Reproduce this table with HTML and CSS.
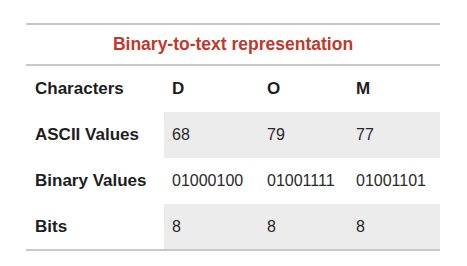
FILE: index.html
```html
<!DOCTYPE html>
<html>
<head>
<meta charset="utf-8">
<link rel="stylesheet" href="styles.css">
</head>
<body>
<div class="wrap">
  <table class="bt">
    <caption class="title">Binary-to-text representation</caption>
    <tbody>
      <tr class="row">
        <th class="label">Characters</th>
        <th class="head c1">D</th>
        <th class="head c2">O</th>
        <th class="head c3">M</th>
      </tr>
      <tr class="row shade">
        <th class="label">ASCII Values</th>
        <td>68</td>
        <td>79</td>
        <td>77</td>
      </tr>
      <tr class="row">
        <th class="label">Binary Values</th>
        <td>01000100</td>
        <td>01001111</td>
        <td>01001101</td>
      </tr>
      <tr class="row shade last">
        <th class="label">Bits</th>
        <td>8</td>
        <td>8</td>
        <td>8</td>
      </tr>
    </tbody>
  </table>
</div>
</body>
</html>
```

FILE: styles.css
```css
html, body {
  margin: 0;
  padding: 0;
  background: #fff;
}
.wrap {
  padding: 23px 0 0 26px;
}
.bt {
  width: 414px;
  border-collapse: collapse;
  table-layout: fixed;
  font-family: "Liberation Sans", Arial, sans-serif;
  color: #222;
}
.title {
  caption-side: top;
  border-top: 2px solid #c8c8c8;
  border-bottom: 2px solid #c8c8c8;
  height: 39px;
  line-height: 39px;
  box-sizing: content-box;
  font-size: 17.5px;
  font-weight: bold;
  color: #c0392b;
  text-align: center;
}
.row th, .row td {
  height: 46px;
  padding: 0 0 0 8px;
  text-align: left;
  vertical-align: middle;
  font-size: 16px;
  box-sizing: border-box;
}
.row .label {
  width: 138px;
  padding-left: 9px;
  font-size: 17px;
  font-weight: bold;
  color: #1e1e1e;
  background: #fff;
}
.row .head {
  font-size: 17px;
  font-weight: bold;
  color: #1e1e1e;
}
.row td {
  font-weight: normal;
  color: #2a2a2a;
}
.c1 { width: 95px; }
.c2 { width: 89px; }
.shade td {
  background: #ececec;
}
.last th, .last td {
  border-bottom: 2px solid #c8c8c8;
}
```
